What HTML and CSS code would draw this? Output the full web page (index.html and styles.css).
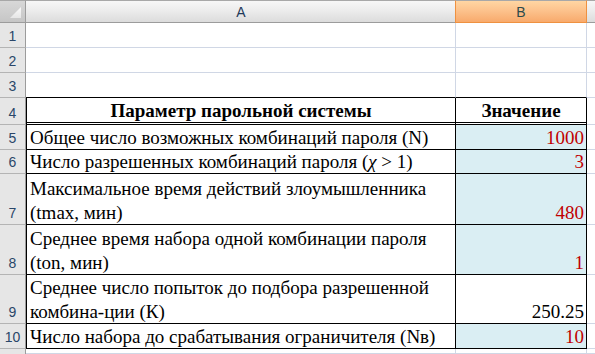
FILE: index.html
```html
<!DOCTYPE html>
<html lang="ru">
<head>
<meta charset="utf-8">
<link rel="stylesheet" href="styles.css">
</head>
<body>
<div class="sheet">
  <div class="corner"><svg width="25" height="21" viewBox="0 0 25 21"><defs><linearGradient id="tg" x1="0" y1="0" x2="0" y2="1"><stop offset="0" stop-color="#fafafa"/><stop offset="1" stop-color="#e6e6e6"/></linearGradient></defs><polygon points="10,17 21,17 21,6" fill="url(#tg)"/></svg></div>
  <div class="ch">A</div>
  <div class="ch sel">B</div>
  <div class="ch rest"></div>

  <div class="rh">1</div><div class="c"></div><div class="c"></div><div class="c f"></div>
  <div class="rh">2</div><div class="c"></div><div class="c"></div><div class="c f"></div>
  <div class="rh">3</div><div class="c edge"></div><div class="c edge"></div><div class="c f"></div>

  <div class="rh">4</div>
  <div class="c t a head center"><span>Параметр парольной системы</span></div>
  <div class="c t head center"><span>Значение</span></div>
  <div class="c f"></div>

  <div class="rh">5</div>
  <div class="c t a"><span>Общее число возможных комбинаций пароля (N)</span></div>
  <div class="c t v fill"><span>1000</span></div>
  <div class="c f"></div>

  <div class="rh">6</div>
  <div class="c t a"><span>Число разрешенных комбинаций пароля (<i>χ</i> &gt; 1)</span></div>
  <div class="c t v fill"><span>3</span></div>
  <div class="c f"></div>

  <div class="rh">7</div>
  <div class="c t a"><span>Максимальное время действий злоумышленника<br>(tmax, мин)</span></div>
  <div class="c t v fill"><span>480</span></div>
  <div class="c f"></div>

  <div class="rh">8</div>
  <div class="c t a"><span>Среднее время набора одной комбинации пароля<br>(tоn, мин)</span></div>
  <div class="c t v fill"><span>1</span></div>
  <div class="c f"></div>

  <div class="rh">9</div>
  <div class="c t a"><span>Среднее число попыток до подбора разрешенной<br>комбина-ции (К)</span></div>
  <div class="c t v black"><span>250.25</span></div>
  <div class="c f"></div>

  <div class="rh">10</div>
  <div class="c t a"><span>Число набора до срабатывания ограничителя (Nв)</span></div>
  <div class="c t v fill"><span>10</span></div>
  <div class="c f"></div>

  <div class="rh last"></div><div class="c"></div><div class="c"></div><div class="c f"></div>
</div>
</body>
</html>
```

FILE: styles.css
```css
* { box-sizing: border-box; }
html, body { margin: 0; padding: 0; background: #fff; overflow: hidden; }

.sheet {
  width: 595px;
  height: 354px;
  display: grid;
  grid-template-columns: 26px 430px 131px 8px;
  grid-template-rows: 23px 25px 25px 25px 27px 25px 24px 51px 50px 49px 25px 1fr;
  font-family: "Liberation Serif", "Times New Roman", serif;
  font-size: 19px;
  color: #000;
}

.corner {
  background: linear-gradient(#d8d8d8, #c6c6c6);
  border-top: 1px solid #a8a8a8;
  border-right: 1px solid #9c9c9c;
  border-bottom: 1px solid #9c9c9c;
  display: flex;
}
.corner svg { display: block; }

.ch {
  background: linear-gradient(#f7f7f7 0%, #ebebeb 50%, #dcdcdc 100%);
  border-top: 1px solid #a8a8a8;
  border-bottom: 1px solid #9c9c9c;
  font-family: "Liberation Sans", Arial, sans-serif;
  font-size: 14px;
  color: #1f3a5a;
  display: flex;
  align-items: center;
  justify-content: center;
  padding-top: 1px;
}
.ch.sel {
  margin-left: -1px;
  background: linear-gradient(#ffd6a3 0%, #fcc08a 50%, #f8aa6c 100%);
  border-left: 1px solid #ef9140;
  border-right: 1px solid #ef9140;
  border-bottom: 1px solid #ef9140;
  color: #2d4a4a;
}

.rh {
  background: #e6e6e6;
  border-right: 1px solid #9c9c9c;
  border-bottom: 1px solid #b4b4b4;
  font-family: "Liberation Sans", Arial, sans-serif;
  font-size: 14px;
  line-height: 1;
  color: #2a4669;
  display: flex;
  align-items: flex-end;
  justify-content: center;
  padding-bottom: 4px;
}
.rh.last { border-bottom: 0; }

.c {
  border-right: 1px solid #d0d7e5;
  border-bottom: 1px solid #d0d7e5;
  display: flex;
  align-items: flex-end;
  padding: 0 3px;
  line-height: 24px;
  white-space: nowrap;
}
.c span { margin-bottom: -1px; }
.c.f { border-right: 0; }
.c.edge { border-bottom-color: #000; }

.c.t {
  border-right-color: #000;
  border-bottom-color: #000;
}
.c.t.a { border-left: 1px solid #000; padding-left: 3px; }

.c.head {
  font-weight: bold;
  border-bottom: 3px double #000;
  align-items: center;
  padding-top: 1px;
}
.c.head span { margin-bottom: 0; }
.center { justify-content: center; }

.c.v {
  justify-content: flex-end;
  padding-right: 2px;
  color: #c00000;
}
.c.v.black { color: #000; }
.c.fill { background: #daeef3; }
```
